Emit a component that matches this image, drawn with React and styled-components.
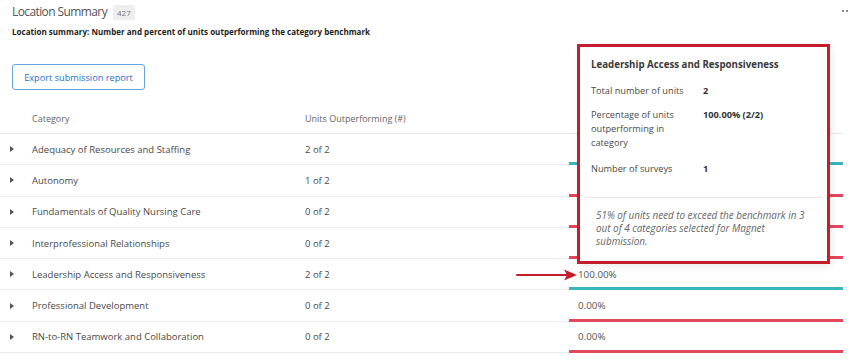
import React from "react";
import styled, { createGlobalStyle } from "styled-components";

const Global = createGlobalStyle`
  html, body { margin: 0; padding: 0; background: #fff; }
  body { font-family: "Open Sans", "Liberation Sans", sans-serif; color: #444; }
  * { box-sizing: border-box; }
`;

const Page = styled.div`
  position: relative;
  width: 850px;
  height: 364px;
  overflow: hidden;
  background: #fff;
`;

const TitleRow = styled.div`
  display: flex;
  align-items: center;
  gap: 6px;
  height: 16px;
  margin-top: 4px;
  padding: 0 12px;
`;

const Title = styled.span`
  font-size: 12px;
  letter-spacing: -0.6px;
  line-height: 16px;
  color: #555;
`;

const Badge = styled.span`
  display: inline-flex;
  align-items: center;
  height: 15px;
  padding: 0 4px;
  background: #eeeeee;
  border-radius: 2px;
  font-size: 8px;
  color: #777;
`;

const Dots = styled.div`
  position: absolute;
  top: 10px;
  right: 2px;
  display: flex;
  gap: 2px;
`;

const Dot = styled.span`
  width: 2px;
  height: 2px;
  border-radius: 50%;
  background: #666;
`;

const Subtitle = styled.div`
  margin-top: 6px;
  padding: 0 12px;
  font-size: 8.05px;
  line-height: 12px;
  font-weight: 700;
  color: #1e1e1e;
`;

const ExportButton = styled.button`
  display: block;
  margin: 26px 0 0 12px;
  width: 133px;
  height: 26px;
  border: 1px solid #6aa3e0;
  border-radius: 3px;
  background: #fff;
  color: #1f6fc9;
  font-family: inherit;
  font-size: 9.2px;
  padding: 0;
`;

const Table = styled.div`
  margin-top: 14px;
  width: 843px;
  display: grid;
  grid-template-columns: 32px 273px 264px 274px;
`;

const HeadCell = styled.div`
  height: 30px;
  display: flex;
  align-items: center;
  border-bottom: 1px solid #e6e6e6;
  font-size: 9px;
  color: #666;
  padding-left: ${(p) => p.$pad || 0}px;
`;

const Cell = styled.div`
  height: 31.3px;
  display: flex;
  align-items: center;
  border-bottom: 1px solid #ececec;
  font-size: 9.5px;
  color: #4a4a4a;
  padding-left: ${(p) => p.$pad || 0}px;
`;

const PctCell = styled(Cell)`
  border-bottom: 3px solid ${(p) => (p.$good ? "#37b6bf" : "#e4475b")};
  padding-left: 9px;
  padding-top: 2px;
  font-size: 9.8px;
  color: #555;
`;

const Caret = styled.span`
  display: block;
  width: 0;
  height: 0;
  border-left: 4px solid #555;
  border-top: 3px solid transparent;
  border-bottom: 3px solid transparent;
`;

const Tooltip = styled.div`
  position: absolute;
  left: 577px;
  top: 44px;
  width: 253px;
  height: 220px;
  border: 3px solid #c41e2d;
  background: #fff;
  box-shadow: 2px 3px 8px rgba(0, 0, 0, 0.08);
  display: flex;
  flex-direction: column;
`;

const TipBody = styled.div`
  padding: 11px 11px 0 11px;
  display: flex;
  flex-direction: column;
`;

const TipTitle = styled.div`
  font-size: 9.7px;
  font-weight: 700;
  line-height: 14px;
  color: #3a3a3a;
  margin-bottom: 12px;
`;

const StatRow = styled.div`
  display: grid;
  grid-template-columns: 112px 1fr;
  font-size: 9.2px;
  line-height: 14px;
  color: #4a4a4a;
  margin-bottom: ${(p) => p.$gap}px;
`;

const StatLabel = styled.div`
  display: flex;
  flex-direction: column;
`;

const StatValue = styled.div`
  font-weight: 700;
  color: #333;
`;

const Divider = styled.div`
  margin: 11px 5px 0 5px;
  border-top: 1px solid #e4e4e4;
`;

const Note = styled.div`
  padding: 11px 12px 0 16px;
  font-size: 9.9px;
  line-height: 13px;
  font-style: italic;
  color: #666;
`;

const Arrow = styled.svg`
  position: absolute;
  left: 516px;
  top: 267px;
`;

const rows = [
  { name: "Adequacy of Resources and Staffing", units: "2 of 2", pct: "100.00%", good: true },
  { name: "Autonomy", units: "1 of 2", pct: "50.00%", good: false },
  { name: "Fundamentals of Quality Nursing Care", units: "0 of 2", pct: "0.00%", good: false },
  { name: "Interprofessional Relationships", units: "0 of 2", pct: "0.00%", good: false },
  { name: "Leadership Access and Responsiveness", units: "2 of 2", pct: "100.00%", good: true },
  { name: "Professional Development", units: "0 of 2", pct: "0.00%", good: false },
  { name: "RN-to-RN Teamwork and Collaboration", units: "0 of 2", pct: "0.00%", good: false },
];

export default function App() {
  return (
    <Page>
      <Global />
      <TitleRow>
        <Title>Location Summary</Title>
        <Badge>427</Badge>
      </TitleRow>
      <Dots>
        <Dot />
        <Dot />
      </Dots>
      <Subtitle>
        Location summary: Number and percent of units outperforming the category benchmark
      </Subtitle>
      <ExportButton>Export submission report</ExportButton>
      <Table>
        <HeadCell />
        <HeadCell>Category</HeadCell>
        <HeadCell>Units Outperforming (#)</HeadCell>
        <HeadCell $pad={9}>Units Outperforming (%)</HeadCell>
        {rows.map((r) => (
          <React.Fragment key={r.name}>
            <Cell $pad={10}>
              <Caret />
            </Cell>
            <Cell>{r.name}</Cell>
            <Cell>{r.units}</Cell>
            <PctCell $good={r.good}>{r.pct}</PctCell>
          </React.Fragment>
        ))}
      </Table>
      <Tooltip>
        <TipBody>
          <TipTitle>Leadership Access and Responsiveness</TipTitle>
          <StatRow $gap={10}>
            <StatLabel>Total number of units</StatLabel>
            <StatValue>2</StatValue>
          </StatRow>
          <StatRow $gap={12}>
            <StatLabel>
              <span>Percentage of units</span>
              <span>outperforming in</span>
              <span>category</span>
            </StatLabel>
            <StatValue>100.00% (2/2)</StatValue>
          </StatRow>
          <StatRow $gap={10}>
            <StatLabel>Number of surveys</StatLabel>
            <StatValue>1</StatValue>
          </StatRow>
        </TipBody>
        <Divider />
        <Note>
          51% of units need to exceed the benchmark in 3 out of 4 categories selected for Magnet
          submission.
        </Note>
      </Tooltip>
      <Arrow width="62" height="16" viewBox="0 0 62 16">
        <line x1="1" y1="8" x2="52" y2="8" stroke="#c41e2d" strokeWidth="2" strokeLinecap="round" />
        <path d="M48 2.5 L61 8 L48 13.5 L51 8 Z" fill="#c41e2d" />
      </Arrow>
    </Page>
  );
}
